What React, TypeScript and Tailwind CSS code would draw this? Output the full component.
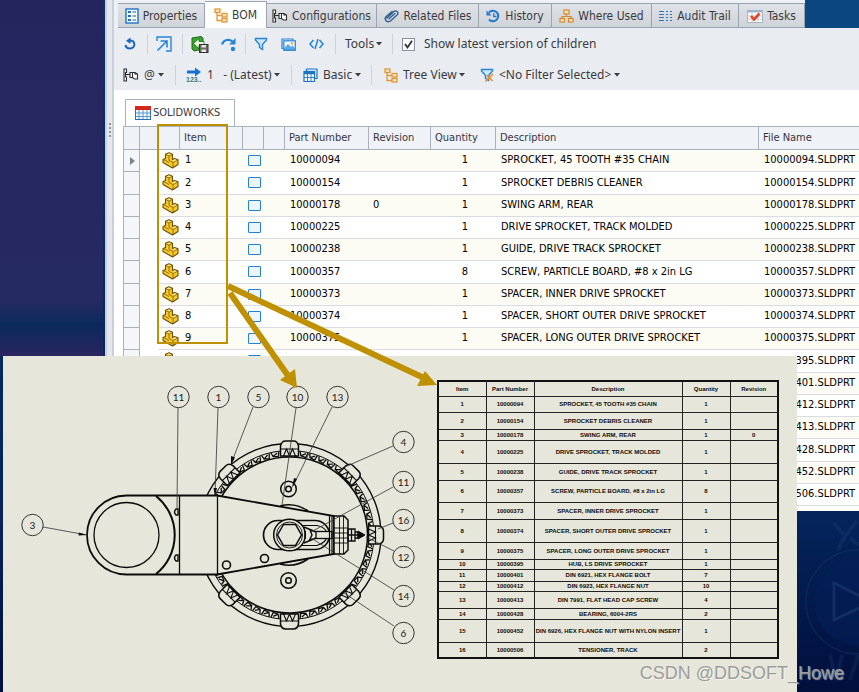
import type { ReactNode } from "react";

const INK = "#0c0c0c";
const SHEET = "#e6e6da";

/* ---------- icons ---------- */

function PropertiesIcon() {
  return (
    <svg width="14" height="16" viewBox="0 0 14 16" fill="none">
      <rect x="1" y="1" width="12" height="14" fill="#f7fbff" stroke="#1b74c5" strokeWidth="1.4" />
      <path d="M3 3h3v2H3zM3 7h3v2H3zM3 11h3v2H3z" fill="#1b74c5" />
      <path d="M7.500 4H11M7.500 8H11M7.500 12H11" stroke="#4a5560" />
    </svg>
  );
}

function TreeIcon() {
  return (
    <svg width="14" height="15" viewBox="0 0 14 15" fill="none" stroke="#e0993a" strokeWidth="1.3">
      <rect x="1" y="1" width="5" height="3.500" fill="#fbe3bd" />
      <path d="M3 4.500V12.500H8M3 7.500H8" />
      <rect x="8" y="5.500" width="5" height="3.500" fill="#fbe3bd" />
      <rect x="8" y="10.500" width="5" height="3.500" fill="#fbe3bd" />
    </svg>
  );
}

function ConfigIcon() {
  return (
    <svg width="16" height="14" viewBox="0 0 16 14" fill="none" stroke="#2d2d2d" strokeWidth="1.1">
      <path d="M1 1H3.500V4.500H2.500V9H3.500V13H1z" fill="#fff" />
      <path d="M3 6.500H7" />
      <path d="M7 4.500H9.500V9.500H7zM9.500 4.500H12L14.500 6V11H11.500L9.500 9.500M12 4.500V6H14.500" fill="#fff" />
    </svg>
  );
}

function ClipIcon() {
  return (
    <svg width="16" height="14" viewBox="0 0 16 14" fill="none" strokeLinecap="round">
      <path
        d="M3 9L9.500 2.800C12 0.500 15.500 3.500 13 6L6.500 12C3.500 14 -0.500 10.500 2 7.800L8 2.500M5 9.800L10.800 4.500"
        stroke="#2f5f92"
        strokeWidth="1.400"
      />
    </svg>
  );
}

function HistoryIcon() {
  return (
    <svg width="15" height="14" viewBox="0 0 15 14" fill="none" stroke="#1f78cf">
      <path d="M3 3.500A5.300 5.300 0 1 1 3 10.500" strokeWidth="2" />
      <path d="M0.500 1.500V6.500H5.500z" fill="#1f78cf" stroke="none" />
      <path d="M7.800 4V7.500H10.500" strokeWidth="1.300" />
    </svg>
  );
}

function WhereUsedIcon() {
  return (
    <svg width="15" height="14" viewBox="0 0 15 14" fill="none" stroke="#d08a2c" strokeWidth="1.200">
      <rect x="5" y="1" width="5" height="4" fill="#fbe3bd" />
      <path d="M7.500 5V7.500M3 9.500V7.500H12V9.500" />
      <rect x="1" y="9.500" width="4.500" height="3.500" fill="#fbe3bd" />
      <rect x="9.500" y="9.500" width="4.500" height="3.500" fill="#fbe3bd" />
    </svg>
  );
}

function AuditIcon() {
  return (
    <svg width="14" height="12" viewBox="0 0 14 12" stroke="#2f78bd" strokeWidth="1.200">
      <path d="M0 1.500H5M0 4.500H5M0 7.500H5M0 10.500H5" />
      <path d="M7 1.500H9M7 4.500H9M7 7.500H9M7 10.500H9M11 1.500H13M11 4.500H13M11 7.500H13M11 10.500H13" />
    </svg>
  );
}

function TasksIcon() {
  return (
    <svg width="16" height="14" viewBox="0 0 16 14" fill="none">
      <rect x="0.500" y="1.500" width="15" height="12" fill="#fff" stroke="#a8b4c2" />
      <rect x="1" y="1" width="14" height="2.500" fill="#9bb4cf" />
      <path d="M1 7H15M1 10H15M5 4V13M11 4V13" stroke="#c3ccd6" />
      <path d="M4 7L7 10.500L12.500 4.500" stroke="#e2452a" strokeWidth="2.600" />
    </svg>
  );
}

function RefreshIcon() {
  return (
    <svg width="12" height="14" viewBox="0 0 12 14" fill="none">
      <path d="M5 3.500C12 2.500 12 11.500 6 11.500C3.500 11.500 1.800 10 1.500 8" stroke="#1b66b8" strokeWidth="2" />
      <path d="M6.500 0.500V7L2 3.700z" fill="#1b66b8" />
    </svg>
  );
}

function OpenIcon() {
  return (
    <svg width="16" height="16" viewBox="0 0 16 16" fill="none" stroke="#2585d3" strokeWidth="1.400">
      <path d="M1 5V1H15V15H10" />
      <path d="M1.500 14.500L10.500 5.500M4.500 5H11V11.500" strokeWidth="1.600" />
    </svg>
  );
}

function ExportIcon() {
  return (
    <svg width="18" height="17" viewBox="0 0 18 17" fill="none">
      <path d="M1 2L10 0.500L12 2V13L3 15L1 13z" fill="#3da332" stroke="#1d6b1a" />
      <path d="M2.500 7.500L8 2.500V5.500H13V9.500H8V12.500z" fill="#e9ffe0" stroke="#1d6b1a" strokeWidth="0.800" />
      <rect x="8.500" y="8.500" width="8.500" height="8" fill="#6b6b62" stroke="#333" />
      <path d="M10.500 9H15V11.500H10.500zM10.500 13.500H15V16H10.500z" fill="#e8e8e0" />
    </svg>
  );
}

function StepIcon() {
  return (
    <svg width="16" height="15" viewBox="0 0 16 15" fill="none">
      <path d="M1 7.500C2.500 2.500 8 1.500 11.500 4.500" stroke="#2585d3" strokeWidth="2.200" />
      <path d="M14.500 1V7.500H8z" fill="#2585d3" />
      <circle cx="12" cy="12" r="2.200" fill="#2585d3" />
    </svg>
  );
}

function FunnelIcon({ crossed = false }: { crossed?: boolean }) {
  return (
    <svg width="14" height="14" viewBox="0 0 14 14" fill="none">
      <path
        d="M1.500 1.500H12.500V3L8.500 7.500V12.500L5.500 10.500V7.500L1.500 3z"
        fill="#cfe7fa"
        stroke="#2585d3"
        strokeWidth="1.400"
      />
      {crossed && <path d="M5.500 13.500L13 6M7 7L12.500 13" stroke="#ef8b2c" strokeWidth="1.600" />}
    </svg>
  );
}

function PictureIcon() {
  return (
    <svg width="15" height="13" viewBox="0 0 15 13" fill="none" stroke="#2585d3" strokeWidth="1.200">
      <path d="M2.500 10.500H1V1H12V2.500" />
      <rect x="2.800" y="2.800" width="11.500" height="9.500" fill="#eaf5fe" />
      <path d="M3.500 10.500L7 6.500L10 9.500L11.500 8L13.500 10.500V12H3.500z" fill="#5aaae6" strokeWidth="0.600" />
      <circle cx="11" cy="5.500" r="1.200" fill="#efb13d" stroke="none" />
    </svg>
  );
}

function CodeIcon() {
  return (
    <svg width="15" height="12" viewBox="0 0 15 12" fill="none" stroke="#2585d3" strokeWidth="1.500">
      <path d="M4.500 2L1 6L4.500 10M10.500 2L14 6L10.500 10M9 1L6 11" />
    </svg>
  );
}

function VersionIcon() {
  return (
    <svg width="16" height="16" viewBox="0 0 16 16" overflow="visible">
      <path d="M1 3.500H9V0.500L15 5L9 9.500V6.500H1z" fill="#1572d0" />
      <text x="0" y="15" className="fill-[#2b7f86] font-['Liberation_Sans',sans-serif] text-[7px] font-bold">
        123..
      </text>
    </svg>
  );
}

function LayoutIcon() {
  return (
    <svg width="15" height="14" viewBox="0 0 15 14" fill="none" stroke="#1b74c5" strokeWidth="1.200">
      <path d="M3.500 3V1H14V10.500H12" fill="#dceefb" />
      <rect x="1" y="3.500" width="10.500" height="10" fill="#fff" />
      <path d="M1 5H11.500" strokeWidth="2.500" />
      <path d="M4.500 5V13.500M8 5V13.500M1 9.500H11.500" strokeWidth="0.900" />
    </svg>
  );
}

function SheetIcon() {
  return (
    <svg width="16" height="14" viewBox="0 0 16 14" fill="none">
      <rect x="0.500" y="0.500" width="15" height="13" fill="#f3f8fd" stroke="#2b6fb3" />
      <path d="M1 7H15M1 10.500H15M4 4V13M8 4V13M12 4V13" stroke="#5f97cc" />
      <rect x="0" y="0" width="16" height="4" fill="#d3261c" />
    </svg>
  );
}

function PartIcon() {
  return (
    <svg width="17" height="17" viewBox="0 0 17 17" stroke="#6b4f0c" strokeLinejoin="round" fill="none">
      <path
        d="M3.500 2.300L7 0.800L10.500 2.300V7.500L12.500 6.500L16 7.800V12.500L10.500 16L1 10.500V7.500L3.500 6.500z"
        fill="#f6c928"
        strokeWidth="1.100"
      />
      <path d="M4.200 2.600L7 1.500L9.800 2.500L7 3.800zM10.300 8.800L12.600 7.300L15.300 8.200L11.500 10z" fill="#fde27a" stroke="none" />
      <path d="M3.500 2.500L7 4L10.500 2.500M7 4V8.500L11 10.500V15.500M11 10.500L16 8M1.500 7.500L7 10.500" strokeWidth="0.700" />
    </svg>
  );
}

function Caret() {
  return (
    <svg width="6" height="4" viewBox="0 0 6 4" className="pointer-events-none shrink-0">
      <path d="M0 0H6L3 3.500z" fill="#3c3c3c" />
    </svg>
  );
}

/* ---------- toolbar ---------- */

const tabs: { name: string; icon: ReactNode; width: string }[] = [
  { name: "Properties", icon: <PropertiesIcon />, width: "w-[87px]" },
  { name: "BOM", icon: <TreeIcon />, width: "w-[62px]" },
  { name: "Configurations", icon: <ConfigIcon />, width: "w-[110px]" },
  { name: "Related Files", icon: <ClipIcon />, width: "w-[102px]" },
  { name: "History", icon: <HistoryIcon />, width: "w-[73px]" },
  { name: "Where Used", icon: <WhereUsedIcon />, width: "w-[100px]" },
  { name: "Audit Trail", icon: <AuditIcon />, width: "w-[87px]" },
  { name: "Tasks", icon: <TasksIcon />, width: "w-[66px]" },
];

function TabStrip() {
  return (
    <div className="flex h-7 items-end bg-[#0b4680]">
      <div role="tablist" className="flex h-7 shrink-0 items-end bg-[#edf0f4] pl-1">
        {tabs.map((t) => {
          const active = t.name === "BOM";
          return (
            <button
              key={t.name}
              role="tab"
              aria-selected={active}
              className={`${t.width} flex shrink-0 items-center justify-center gap-1 whitespace-nowrap border-r border-t border-[#9aa3b0] ${
                active ? "h-[27px] bg-white" : "h-[25px] border-b bg-[linear-gradient(180deg,#dfe2e6,#cfd4da)]"
              }`}
            >
              {t.icon}
              {t.name}
            </button>
          );
        })}
      </div>
    </div>
  );
}

function Group({ width, children }: { width: string; children: ReactNode }) {
  return <div className={`${width} flex h-5 shrink-0 items-center border-r border-[#cdd3db]`}>{children}</div>;
}

function IconButton({ label, children }: { label: string; children: ReactNode }) {
  return (
    <button aria-label={label} className="flex items-center justify-center">
      {children}
    </button>
  );
}

function Picker({ label, value, icon }: { label: string; value: string; icon: ReactNode }) {
  return (
    <label className="flex items-center gap-[2px]">
      {icon}
      <select aria-label={label} className="appearance-none bg-transparent pl-[3px]">
        <option>{value}</option>
      </select>
      <Caret />
    </label>
  );
}

function Toolbar() {
  return (
    <div className="h-[62px] bg-[#e9edf2] font-['Noto_Sans',sans-serif] text-[12px]">
      <div className="flex h-8 items-center">
        <Group width="w-[34px]">
          <div className="pl-[10px]"><IconButton label="Refresh"><RefreshIcon /></IconButton></div>
        </Group>
        <Group width="w-[35px]">
          <div className="pl-2"><IconButton label="Open"><OpenIcon /></IconButton></div>
        </Group>
        <Group width="w-[63px]">
          <div className="flex gap-3 pl-2">
            <IconButton label="Export"><ExportIcon /></IconButton>
            <IconButton label="Step over"><StepIcon /></IconButton>
          </div>
        </Group>
        <Group width="w-[90px]">
          <div className="flex gap-[13px] pl-2">
            <IconButton label="Filter"><FunnelIcon /></IconButton>
            <IconButton label="Preview"><PictureIcon /></IconButton>
            <IconButton label="Source"><CodeIcon /></IconButton>
          </div>
        </Group>
        <Group width="w-[57px]">
          <button className="flex items-center gap-[2px] pl-[9px]">
            Tools
            <Caret />
          </button>
        </Group>
        <label className="flex items-center gap-[9px] whitespace-nowrap pl-[9px]">
          <span className="grid">
            <input
              type="checkbox"
              defaultChecked
              className="peer col-start-1 row-start-1 h-[13px] w-[13px] appearance-none border border-[#8b929b] bg-[#fafbfc]"
            />
            <svg
              width="13"
              height="13"
              viewBox="0 0 13 13"
              className="pointer-events-none invisible col-start-1 row-start-1 peer-checked:visible"
            >
              <path d="M3 6L5.500 9.500L10 2.800" fill="none" stroke="#333" strokeWidth="1.800" />
            </svg>
          </span>
          Show latest version of children
        </label>
      </div>
      <div className="flex h-[30px] items-center">
        <Group width="w-[62px]">
          <button className="flex items-center gap-[3px] pl-[9px]">
            <ConfigIcon />
            <span className="pl-[2px]">@</span>
            <Caret />
          </button>
        </Group>
        <Group width="w-[116px]">
          <div className="pl-[10px]"><Picker label="Version" value={"1\u00a0\u00a0 - (Latest)"} icon={<VersionIcon />} /></div>
        </Group>
        <Group width="w-[80px]">
          <div className="pl-[11px]"><Picker label="Layout" value="Basic" icon={<LayoutIcon />} /></div>
        </Group>
        <div className="flex gap-[15px] pl-3">
          <Picker label="View" value="Tree View" icon={<TreeIcon />} />
          <Picker label="Filter" value="<No Filter Selected>" icon={<FunnelIcon crossed />} />
        </div>
      </div>
    </div>
  );
}

/* ---------- parts grid ---------- */

type Part = { no: string; desc: string; qty: string; rev?: string };

const parts: Part[] = [
  { no: "10000094", desc: "SPROCKET, 45 TOOTH #35 CHAIN", qty: "1" },
  { no: "10000154", desc: "SPROCKET DEBRIS CLEANER", qty: "1" },
  { no: "10000178", desc: "SWING ARM, REAR", qty: "1", rev: "0" },
  { no: "10000225", desc: "DRIVE SPROCKET, TRACK MOLDED", qty: "1" },
  { no: "10000238", desc: "GUIDE, DRIVE TRACK SPROCKET", qty: "1" },
  { no: "10000357", desc: "SCREW, PARTICLE BOARD, #8 x 2in LG", qty: "8" },
  { no: "10000373", desc: "SPACER, INNER DRIVE SPROCKET", qty: "1" },
  { no: "10000374", desc: "SPACER, SHORT OUTER DRIVE SPROCKET", qty: "1" },
  { no: "10000375", desc: "SPACER, LONG OUTER DRIVE SPROCKET", qty: "1" },
  { no: "10000395", desc: "HUB, LS DRIVE SPROCKET", qty: "1" },
  { no: "10000401", desc: "DIN 6921, HEX FLANGE BOLT", qty: "7" },
  { no: "10000412", desc: "DIN 6923, HEX FLANGE NUT", qty: "10" },
  { no: "10000413", desc: "DIN 7991, FLAT HEAD CAP SCREW", qty: "4" },
  { no: "10000428", desc: "BEARING, 6004-2RS", qty: "2" },
  { no: "10000452", desc: "DIN 6926, HEX FLANGE NUT WITH NYLON INSERT", qty: "1" },
  { no: "10000506", desc: "TENSIONER, TRACK", qty: "2" },
];

/* rows from this index on lie under the drawing sheet, except for the file name */
const FIRST_COVERED = 9;

function PartsGrid() {
  const th = "border-r border-[#a9b1bd] pl-[4px] text-left font-normal";
  return (
    <table className="h-[380px] w-full table-fixed border-separate border-spacing-0 whitespace-nowrap text-[11px] text-black">
      <colgroup>
        <col className="w-[17px]" />
        <col className="w-[19px]" />
        <col className="w-[21px]" />
        <col className="w-[63px]" />
        <col className="w-[21px]" />
        <col className="w-[21px]" />
        <col className="w-[84px]" />
        <col className="w-[62px]" />
        <col className="w-[65px]" />
        <col className="w-[263px]" />
        <col />
      </colgroup>
      <thead className="h-6 bg-[#eff2f7] text-[#36363f] [&_th]:border-b [&_th]:border-t [&_th]:border-b-[#a9b1bd]">
        <tr className="h-6">
          <th className={`${th} border-l`} />
          <th className="border-[#a9b1bd]" />
          <th className={th} />
          <th className={th}>Item</th>
          <th className={th} />
          <th className={th} />
          <th className={th}>Part Number</th>
          <th className={th}>Revision</th>
          <th className={th}>Quantity</th>
          <th className={th}>Description</th>
          <th className="border-[#a9b1bd] pl-[4px] text-left font-normal">File Name</th>
        </tr>
      </thead>
      <tbody className="[&_td]:border-b [&_td]:border-[#d9dce2] [&_td]:p-0">
        {parts.map((p, i) => {
          const open = i < FIRST_COVERED;
          return (
            <tr key={p.no} className={`h-[22px] ${i % 2 === 0 ? "bg-[#fcfbf4]" : "bg-white"}`}>
              <td className="border-x !border-[#a9b1bd] bg-[#f4f6f9]">
                {i === 0 && (
                  <svg width="5" height="8" viewBox="0 0 5 8" className="ml-[6px]">
                    <path d="M0 0L5 4L0 8z" fill="#7d838c" />
                  </svg>
                )}
              </td>
              <td className="!border-white bg-white" />
              <td><div className="pl-[3px]"><PartIcon /></div></td>
              <td><div className="pl-[5px]">{open && i + 1}</div></td>
              <td>
                <input
                  type="checkbox"
                  aria-label={`Select ${p.no}`}
                  className="ml-[5px] block h-[11px] w-[13px] appearance-none rounded-[1px] border border-[#2382cf] bg-[#eef4fb]"
                />
              </td>
              <td />
              <td><div className="pl-[5px]">{open && p.no}</div></td>
              <td><div className="pl-[4px]">{open && p.rev}</div></td>
              <td><div className="pr-[28px] text-right">{open && p.qty}</div></td>
              <td><div className="pl-[5px]">{open && p.desc}</div></td>
              <td><div className="pl-[5px]">{p.no}.SLDPRT</div></td>
            </tr>
          );
        })}
      </tbody>
    </table>
  );
}

/* ---------- drawing sheet ---------- */

const CX = 289.5;
const CY = 535;

const balloons: { n: string; x: number; y: number; to: [number, number]; from: [number, number] }[] = [
  { n: "11", x: 178, y: 397, from: [178, 408], to: [177, 508] },
  { n: "1", x: 218, y: 397, from: [218, 408], to: [215, 495] },
  { n: "5", x: 258, y: 397, from: [253, 407], to: [231, 464] },
  { n: "10", x: 297, y: 397, from: [296, 408], to: [282, 505] },
  { n: "13", x: 337, y: 397, from: [332, 407], to: [293, 486] },
  { n: "4", x: 403, y: 442, from: [393, 446], to: [340, 469] },
  { n: "11", x: 403, y: 482, from: [393, 487], to: [311, 532] },
  { n: "16", x: 403, y: 520, from: [393, 523], to: [378, 529] },
  { n: "12", x: 403, y: 557, from: [394, 551], to: [366, 537] },
  { n: "14", x: 403, y: 596, from: [394, 590], to: [311, 538] },
  { n: "6", x: 403, y: 633, from: [394, 626], to: [344, 593] },
  { n: "3", x: 32, y: 525, from: [43, 527], to: [87, 535] },
];

const teeth = Array.from({ length: 54 }, (_, i) => i * (360 / 54));
const paddles = [0, 45, 90, 135, 225, 270, 315];

function Assembly() {
  return (
    <svg
      width="434"
      height="336"
      viewBox="3 356 434 336"
      fill="none"
      stroke={INK}
      className="shrink-0"
      role="img"
      aria-label="Drive sprocket assembly"
    >
      <g strokeWidth="1.400">
        <circle cx={CX} cy={CY} r="91.500" />
        <circle cx={CX} cy={CY} r="84.500" strokeWidth="1" />
        <circle cx={CX} cy={CY} r="78" strokeWidth="1.500" />
        {teeth.map((a) => (
          <path
            key={a}
            transform={`translate(${CX} ${CY}) rotate(${a})`}
            d="M84 -4L80 -2.500L79 2.500L84 4M80 -2.500L83 2"
            strokeWidth="1.300"
          />
        ))}
        {paddles.map((a) => (
          <g key={a} transform={`translate(${CX} ${CY}) rotate(${a})`}>
            <path d="M79 -9H89Q94 -8 94 -4V4Q94 8 89 9H79z" fill={SHEET} strokeWidth="1.500" />
            <path d="M86 -9V9M79 -6L86 -3L79 0L86 3L79 6" strokeWidth="1.100" />
          </g>
        ))}
      </g>

      <circle cx="288.500" cy="489" r="7.800" strokeWidth="1.500" />
      <circle cx="288.500" cy="489" r="2.800" strokeWidth="1.500" />
      <circle cx="288.500" cy="580.500" r="7.800" strokeWidth="1.500" />
      <circle cx="288.500" cy="580.500" r="2.800" strokeWidth="1.500" />
      <path d="M280 506Q295 502 308 511M280 564Q295 568 308 559" strokeWidth="1.600" />

      <path
        d="M126.500 495.500H217L334 516V554L217 574.500H126.500A39.500 39.500 0 0 1 126.500 495.500z"
        fill={SHEET}
        strokeWidth="1.800"
      />
      <circle cx="126.500" cy="535" r="32.500" strokeWidth="1.300" />
      <path d="M156 496A50 50 0 0 1 156 574" strokeWidth="2" />
      <path d="M179.500 496V574M217.500 496V574" strokeWidth="1.300" />
      <path d="M178 509H176Q173 512 176 515H178zM178 555H176Q173 558 176 561H178z" strokeWidth="1.400" />
      <circle cx="226.500" cy="565" r="4" strokeWidth="1.600" />
      <circle cx="264.500" cy="558.500" r="4" strokeWidth="1.600" />

      <rect x="263.500" y="520.500" width="66" height="29" rx="14.500" strokeWidth="1.700" />
      <path d="M282 525.500H317Q326 527 328 535Q326 543 317 545.500H282" strokeWidth="1.100" />
      <circle cx="289.500" cy="535" r="15.800" fill={SHEET} strokeWidth="1.500" />
      <circle cx="289.500" cy="535" r="13" strokeWidth="0.900" />
      <path d="M277.500 535L283.500 524.500H295.500L301.500 535L295.500 545.500H283.500z" strokeWidth="1.500" />
      <path d="M304 527L316 532M304 543L316 538M305 531V539M310 530L312 535L309 541" strokeWidth="1.400" />
      <rect x="316" y="531.500" width="16" height="7" fill={SHEET} strokeWidth="1.300" />
      <path d="M329.500 515.500V554.500M332 516V554" strokeWidth="1.200" />
      <path d="M334 516H344L348 520V550L344 554H334z" fill={SHEET} strokeWidth="1.500" />
      <path d="M339.500 516V554M343.500 516V554M334 528H348M334 533H348M334 538H348M334 543H348" strokeWidth="0.900" />
      <path d="M348 529H355V541H348zM351.500 529V541M355 532H358V538H355M348 535H358" strokeWidth="1.300" />
      <path d="M358 531L365 535L358 539z" fill={INK} />

      <g strokeWidth="0.800" stroke="#333">
        {balloons.map((b) => (
          <path key={b.n + b.y} d={`M${b.from[0]} ${b.from[1]}L${b.to[0]} ${b.to[1]}`} />
        ))}
      </g>
      <path
        d="M87 535L79 532.500L78.500 535.500zM231 465L231 456L235 457.500zM292 488L297 479L294 478zM215 496L213.500 488H217z"
        fill={INK}
        stroke="none"
      />
      {balloons.map((b) => (
        <g key={b.n + b.x + b.y}>
          <circle cx={b.x + 0.5} cy={b.y} r="10.700" fill={SHEET} strokeWidth="0.900" stroke="#222" />
          <text
            x={b.x + 0.5}
            y={b.y + 4}
            textAnchor="middle"
            stroke="none"
            className="fill-[#1a1a1a] font-['Lato',sans-serif] text-[10px]"
          >
            {b.n}
          </text>
        </g>
      ))}
    </svg>
  );
}

const sheetRowHeights = [
  "h-[16px]", "h-[17px]", "h-[11px]", "h-[23px]", "h-[17px]", "h-[22px]", "h-[17px]", "h-[23px]",
  "h-[17px]", "h-[10px]", "h-[12px]", "h-[10px]", "h-[17px]", "h-[11px]", "h-[23px]", "h-[16px]",
];

function SheetTable() {
  return (
    <table className="w-[341px] table-fixed border-collapse whitespace-nowrap border-2 border-[#111] text-center font-['Liberation_Sans',Arial,sans-serif] text-[6px] font-bold leading-[6px] text-[#0c0c0c] [&_td]:border [&_td]:border-[#222] [&_td]:p-0 [&_th]:border [&_th]:border-[#222] [&_th]:p-0">
      <colgroup>
        <col className="w-[48px]" />
        <col className="w-[48px]" />
        <col className="w-[148px]" />
        <col className="w-[48px]" />
        <col className="w-[48px]" />
      </colgroup>
      <thead>
        <tr className="h-[15px]">
          <th>Item</th>
          <th>Part Number</th>
          <th>Description</th>
          <th>Quantity</th>
          <th>Revision</th>
        </tr>
      </thead>
      <tbody>
        {parts.map((p, i) => (
          <tr key={p.no} className={sheetRowHeights[i]}>
            <td>{i + 1}</td>
            <td>{p.no}</td>
            <td>{p.desc}</td>
            <td>{p.qty}</td>
            <td>{p.rev}</td>
          </tr>
        ))}
      </tbody>
    </table>
  );
}

/* ---------- page ---------- */

export default function App() {
  return (
    <div className="relative min-h-screen overflow-hidden bg-[linear-gradient(180deg,#04346a_0,#04245a_520px,#010f3c_692px)] font-['DejaVu_Sans_Condensed','DejaVu_Sans',Tahoma,sans-serif] text-[12px] text-[#3a3a40]">
      <div className="absolute left-0 top-0 h-[356px] w-[103px] bg-[linear-gradient(180deg,#25255e_0,#262a62_300px,#0b2a5c_325px,#2a2560_356px)]" />

      <svg
        width="64"
        height="180"
        viewBox="795 511 64 180"
        fill="none"
        stroke="#1c3a6e"
        className="absolute right-0 top-[511px]"
      >
        <circle cx="858" cy="602" r="52" strokeWidth="1.500" opacity="0.400" />
        <circle cx="858" cy="602" r="44" fill="#03205a" opacity="0.500" stroke="none" />
        <path d="M834 583V620L872 602z" strokeWidth="3" strokeLinejoin="round" opacity="0.600" />
        <path d="M834 523L845 536L857 521M845 536L838 550M850 538L859 545" strokeWidth="4" opacity="0.400" />
        <path d="M830 655L836 680L842 655M858 655L850 680" strokeWidth="4" opacity="0.300" />
      </svg>

      <main className="ml-[105px] flex h-[511px]">
        <div className="flex w-[9px] shrink-0 items-start justify-center border-l-2 border-r-2 border-[#c8d0da] bg-[#e4e8ee] pt-[123px]">
          <svg width="2" height="15" viewBox="0 0 2 15">
            <path d="M0 0H2V2H0zM0 4H2V6H0zM0 8H2V10H0zM0 12H2V14H0z" fill="#8d95a1" />
          </svg>
        </div>
        <div className="min-w-0 flex-1 overflow-hidden bg-white">
          <TabStrip />
          <Toolbar />
          <div className="pl-[9px] pt-[9px]">
            <button className="ml-[2px] flex h-[27px] w-[110px] items-center gap-[2px] border border-b-0 border-[#a9b1bd] bg-white pl-[9px] text-[11px]">
              <SheetIcon />
              SOLIDWORKS
            </button>
            <PartsGrid />
          </div>
        </div>
      </main>

      <section className="absolute left-[3px] top-[356px] flex h-[336px] w-[794px] items-start bg-[#e6e6da]">
        <Assembly />
        <div className="pt-6">
          <SheetTable />
        </div>
      </section>

      <svg
        width="300"
        height="280"
        viewBox="150 120 300 280"
        fill="none"
        stroke="#bf9000"
        className="pointer-events-none absolute left-[150px] top-[120px]"
      >
        <rect x="158" y="125" width="69" height="218" strokeWidth="2" />
        <path d="M228 286L424 378M230 293L289 377" strokeWidth="6" />
        <path d="M437 385L417 386L425 371zM297 388L280 380L295 369z" fill="#bf9000" stroke="none" />
      </svg>

      <div className="absolute right-[15px] top-[660px] font-['Liberation_Sans',Arial,sans-serif] text-[18px] text-[#9c9d9b] [text-shadow:1px_1px_1px_#ffffff90]">
        CSDN @DDSOFT_Howe
      </div>
    </div>
  );
}
